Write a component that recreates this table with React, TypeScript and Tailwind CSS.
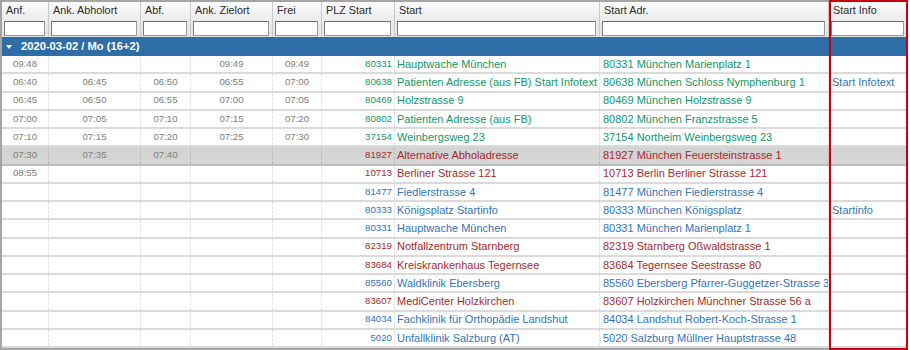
import React from 'react'

type Tone = 'green' | 'red' | 'blue'

interface Row {
  anf?: string
  abh?: string
  abf?: string
  ziel?: string
  frei?: string
  plz: string
  start: string
  adr: string
  info?: string
  tone: Tone
  selected?: boolean
}

const toneClass: Record<Tone, string> = {
  green: 'text-[#12976a]',
  red: 'text-[#a52b2b]',
  blue: 'text-[#3574b4]',
}

const rows: Row[] = [
  { anf: '09:48', ziel: '09:49', frei: '09:49', plz: '80331', start: 'Hauptwache München', adr: '80331 München Marienplatz 1', tone: 'green' },
  { anf: '06:40', abh: '06:45', abf: '06:50', ziel: '06:55', frei: '07:00', plz: '80638', start: 'Patienten Adresse (aus FB) Start Infotext', adr: '80638 München Schloss Nymphenburg 1', info: 'Start Infotext', tone: 'green' },
  { anf: '06:45', abh: '06:50', abf: '06:55', ziel: '07:00', frei: '07:05', plz: '80469', start: 'Holzstrasse 9', adr: '80469 München Holzstrasse 9', tone: 'green' },
  { anf: '07:00', abh: '07:05', abf: '07:10', ziel: '07:15', frei: '07:20', plz: '80802', start: 'Patienten Adresse (aus FB)', adr: '80802 München Franzstrasse 5', tone: 'green' },
  { anf: '07:10', abh: '07:15', abf: '07:20', ziel: '07:25', frei: '07:30', plz: '37154', start: 'Weinbergsweg 23', adr: '37154 Northeim Weinbergsweg 23', tone: 'green' },
  { anf: '07:30', abh: '07:35', abf: '07:40', plz: '81927', start: 'Alternative Abholadresse', adr: '81927 München Feuersteinstrasse 1', tone: 'red', selected: true },
  { anf: '08:55', plz: '10713', start: 'Berliner Strasse 121', adr: '10713 Berlin Berliner Strasse 121', tone: 'red' },
  { plz: '81477', start: 'Fiedlerstrasse 4', adr: '81477 München Fiedlerstrasse 4', tone: 'blue' },
  { plz: '80333', start: 'Königsplatz Startinfo', adr: '80333 München Königsplatz', info: 'Startinfo', tone: 'blue' },
  { plz: '80331', start: 'Hauptwache München', adr: '80331 München Marienplatz 1', tone: 'blue' },
  { plz: '82319', start: 'Notfallzentrum Starnberg', adr: '82319 Starnberg Oßwaldstrasse 1', tone: 'red' },
  { plz: '83684', start: 'Kreiskrankenhaus Tegernsee', adr: '83684 Tegernsee Seestrasse 80', tone: 'red' },
  { plz: '85560', start: 'Waldklinik Ebersberg', adr: '85560 Ebersberg Pfarrer-Guggetzer-Strasse 3', tone: 'blue' },
  { plz: '83607', start: 'MediCenter Holzkirchen', adr: '83607 Holzkirchen Münchner Strasse 56 a', tone: 'red' },
  { plz: '84034', start: 'Fachklinik für Orthopädie Landshut', adr: '84034 Landshut Robert-Koch-Strasse 1', tone: 'blue' },
  { plz: '5020', start: 'Unfallklinik Salzburg (AT)', adr: '5020 Salzburg Müllner Hauptstrasse 48', tone: 'blue' },
]

const columns = ['Anf.', 'Ank. Abholort', 'Abf.', 'Ank. Zielort', 'Frei', 'PLZ Start', 'Start', 'Start Adr.', 'Start Info']

const grid = 'grid grid-cols-[47px_92px_50px_82px_49px_73px_205px_229px_79px]'

function TimeCell({ value, selected }: { value?: string; selected?: boolean }) {
  return (
    <div
      className={`flex items-center justify-center border-r border-dashed text-[9.7px] text-[#7d7d7d] ${
        selected ? 'border-[#b9b9b9]' : 'border-[#e2e2e2]'
      }`}
    >
      {value}
    </div>
  )
}

function DataRow({ row }: { row: Row }) {
  const tone = toneClass[row.tone]
  const sep = row.selected ? 'border-[#b9b9b9]' : 'border-[#e2e2e2]'
  return (
    <div
      className={`${grid} h-[18.25px] border-b-2 ${
        row.selected ? 'bg-[#d4d4d4] border-[#bdbdbd]' : 'bg-white border-[#dadada]'
      }`}
    >
      <TimeCell value={row.anf} selected={row.selected} />
      <TimeCell value={row.abh} selected={row.selected} />
      <TimeCell value={row.abf} selected={row.selected} />
      <TimeCell value={row.ziel} selected={row.selected} />
      <TimeCell value={row.frei} selected={row.selected} />
      <div className={`flex items-center justify-end pr-[2px] border-r border-dashed text-[9.7px] ${sep} ${tone}`}>
        {row.plz}
      </div>
      <div className={`flex items-center pl-[2px] border-r border-dashed text-[11px] whitespace-nowrap overflow-hidden ${sep} ${tone}`}>
        {row.start}
      </div>
      <div className={`flex items-center pl-[3px] border-r border-dashed text-[11px] whitespace-nowrap overflow-hidden ${sep} ${tone}`}>
        {row.adr}
      </div>
      <div className="flex items-center pl-[3px] text-[11px] whitespace-nowrap overflow-hidden text-[#3574b4]">
        {row.info}
      </div>
    </div>
  )
}

export default function App() {
  return (
    <div className="relative w-[910px] h-[350px] overflow-hidden bg-white font-['Liberation_Sans',Arial,sans-serif]">
      <div className="w-[908px] h-[350px] border-l-2 border-t-2 border-b-2 border-[#a4a4a4] flex flex-col">
        <div className={`${grid} h-[17px] bg-gradient-to-b from-[#fbfbfb] to-[#ececec]`}>
          {columns.map((c) => (
            <div key={c} className="flex items-center pl-[4px] border-r border-[#c9c9c9] text-[10.8px] text-[#2b2b2b] whitespace-nowrap">
              {c}
            </div>
          ))}
        </div>
        <div className={`${grid} h-[18px] bg-gradient-to-b from-[#ededed] to-[#e2e2e2]`}>
          {columns.map((c) => (
            <div key={c} className="flex items-center pl-[2px] pr-[3px] border-r border-[#c9c9c9]">
              <input
                type="text"
                className="w-full h-[15px] bg-white border border-[#9a9a9a] border-t-[#6e6e6e] border-l-[#7a7a7a] outline-none"
              />
            </div>
          ))}
        </div>
        <div className="h-[19px] bg-[#2f6da6] flex items-center text-white">
          <svg width="6" height="4" viewBox="0 0 6 4" className="ml-[4px] mr-[9px]">
            <path d="M0 0h6L3 4z" fill="#fff" />
          </svg>
          <span className="text-[11.2px] font-bold">2020-03-02 / Mo (16+2)</span>
        </div>
        {rows.map((r, i) => (
          <DataRow key={i} row={r} />
        ))}
      </div>
      <div className="absolute left-[829px] top-0 w-[79px] h-[350px] border-2 border-[#c8000f] pointer-events-none" />
    </div>
  )
}
